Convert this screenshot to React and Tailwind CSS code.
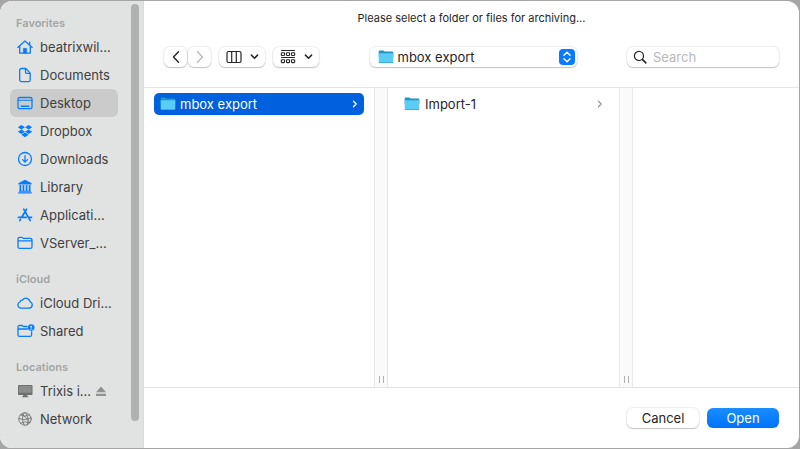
import { useState } from "react";
import { FaDropbox } from "react-icons/fa6";

const line = {
  fill: "none",
  stroke: "currentColor",
  strokeWidth: 1.3,
  strokeLinecap: "round",
  strokeLinejoin: "round",
};

const HomeIcon = () => (
  <svg viewBox="0 0 16 16" className="w-4 h-4" {...line}>
    <path d="M.8 8.400 8 1.900l7.200 6.500M2.700 7.200v6.900h10.600V7.200M12.700 5.800V3.200" />
    <path d="M6.300 14V9.300h3.400V14z" fill="currentColor" strokeWidth="0.5" />
  </svg>
);

const DocumentIcon = () => (
  <svg viewBox="0 0 16 16" className="w-4 h-4" {...line}>
    <path d="M4.200 1.500h4.600l4.400 4.600v7a1.500 1.500 0 0 1-1.500 1.500H4.200a1.500 1.500 0 0 1-1.500-1.500V3a1.500 1.500 0 0 1 1.500-1.500z" />
    <path d="M8.500 1.800v3.500q0 1.100 1.100 1.100h3.400" />
  </svg>
);

const DesktopIcon = () => (
  <svg viewBox="0 0 16 16" className="w-4 h-4" {...line}>
    <rect x="1" y="2.500" width="14" height="11.200" rx="1.600" />
    <path d="M1.200 5.200h13.600" strokeWidth="1.100" />
    <path d="M4.300 11.300h7.400" strokeWidth="1.600" />
  </svg>
);

const DownloadsIcon = () => (
  <svg viewBox="0 0 16 16" className="w-4 h-4" {...line}>
    <circle cx="8" cy="8" r="6.500" />
    <path d="M8 4.600v6.300M5.500 8.600 8 11.100l2.500-2.500" />
  </svg>
);

const LibraryIcon = () => (
  <svg viewBox="0 0 16 16" className="w-4 h-4" fill="currentColor">
    <path d="M8 .8 14.300 4q.4.300.4.900v.6H1.300v-.6q0-.6.400-.9z" />
    <path d="M2.500 6h1.800v6H2.500zM5.600 6h1.700v6H5.600zM8.700 6h1.700v6H8.700zM11.700 6h1.800v6h-1.800zM2 11.800h12v1H2zM1.200 13.300h13.600v1.300H1.200z" />
  </svg>
);

const ApplicationsIcon = () => (
  <svg viewBox="0 0 16 16" className="w-4 h-4" {...line} strokeWidth="1.700">
    <path d="M9.500 2.200 4.700 10.300M6.700 2.200l6.500 11.400M1.500 10.400h7.700M12 10.400h2.500M3.500 12.400l-.7 1.200" />
  </svg>
);

const FolderIcon = () => (
  <svg viewBox="0 0 16 16" className="w-4 h-4" {...line}>
    <path d="M1 4q0-1.600 1.600-1.600h2.200q.7 0 1.200.5l.6.500h6.800Q15 3.400 15 5v6.700q0 1.600-1.600 1.600H2.600Q1 13.300 1 11.700zM1.200 5.900h13.600" />
  </svg>
);

const CloudIcon = () => (
  <svg viewBox="0 0 16 16" className="w-4 h-4" {...line}>
    <path d="M4 13.200a3.200 3.200 0 0 1-1-6.200 2.100 2.100 0 0 1 2.500-1.800 4 4 0 0 1 7.400 1.400A3.400 3.400 0 0 1 12.300 13.200z" />
  </svg>
);

const SharedIcon = () => (
  <svg viewBox="0 0 18 16" className="w-[18px] h-4" {...line}>
    <path d="M10 3.500H6.500l-.6-.5q-.5-.5-1.200-.5H2.500Q1 2.500 1 4v7.900q0 1.500 1.500 1.500h10.600q1.500 0 1.500-1.500V8.800M1.200 6h9.200" />
    <circle cx="14.200" cy="4.600" r="3.300" fill="currentColor" stroke="none" />
    <circle cx="14.200" cy="3.700" r="1" fill="#e1e3e2" stroke="none" />
    <path d="M12.600 6.500q1.600-1.900 3.200 0z" fill="#e1e3e2" stroke="none" />
  </svg>
);

const ComputerIcon = () => (
  <svg viewBox="0 0 16 16" className="w-4 h-4">
    <rect x="1" y="2" width="14.500" height="10" rx=".8" fill="#6e6f6f" />
    <rect x="2" y="3" width="12.500" height="6.800" fill="#8b8c8c" />
    <path d="M6.300 12h3.900l.5 1.700h-5zM5 13.500h6.500v.8H5z" fill="#6e6f6f" />
  </svg>
);

const NetworkIcon = () => (
  <svg viewBox="0 0 16 16" className="w-4 h-4 text-[#737474]" {...line} strokeWidth="0.900">
    <circle cx="8" cy="8" r="6.200" />
    <path d="M2 7.500q6 2.500 12-.8M3.300 4q5 2.500 9.300-.2M3.500 12.200q4-2.500 9.300-.5M7 2q-3.500 6 .3 12.200M8.500 1.900q4.500 5 1.700 12M4.500 3q5 3 8.300 8.500" />
  </svg>
);

const EjectIcon = () => (
  <svg viewBox="0 0 12 12" className="w-3 h-3" fill="#8f9090">
    <path d="M6 1.500 11 7.300H1zM1 8.700h10v2.200H1z" />
  </svg>
);

const BlueFolder = () => (
  <svg viewBox="0 0 16 16" className="w-4 h-4 shrink-0">
    <path d="M.7 2.500q0-1 1-1h3.600l1.400 1.100h7.600q1 0 1 1V8H.7z" fill="#1d97c4" />
    <path d="M.7 4.300h14.600v8.700q0 1-1 1H1.700q-1 0-1-1z" fill="#5accf6" />
    <path d="M.8 13.200h14.400q-.2.900-1 .9H1.800q-.8 0-1-.9z" fill="#2fa6d5" />
  </svg>
);

const Chevron = ({ d, className, width = 1.4 }) => (
  <svg viewBox="0 0 16 16" className={className} {...line} strokeWidth={width}>
    <path d={d} />
  </svg>
);

const groups = [
  {
    title: "Favorites",
    items: [
      { label: "beatrixwil...", icon: <HomeIcon /> },
      { label: "Documents", icon: <DocumentIcon /> },
      { label: "Desktop", icon: <DesktopIcon /> },
      { label: "Dropbox", icon: <FaDropbox className="w-4 h-[14px]" /> },
      { label: "Downloads", icon: <DownloadsIcon /> },
      { label: "Library", icon: <LibraryIcon /> },
      { label: "Applicati...", icon: <ApplicationsIcon /> },
      { label: "VServer_...", icon: <FolderIcon /> },
    ],
  },
  {
    title: "iCloud",
    items: [
      { label: "iCloud Dri...", icon: <CloudIcon /> },
      { label: "Shared", icon: <SharedIcon /> },
    ],
  },
  {
    title: "Locations",
    items: [
      { label: "Trixis i...", icon: <ComputerIcon />, eject: true },
      { label: "Network", icon: <NetworkIcon /> },
    ],
  },
];

const raised = "bg-white rounded-md shadow-[0_0_1px_1px_#00000012,0_1px_1px_#00000030]";

const Divider = () => (
  <div className="bg-[#fafafa] border-x border-[#e8e8e8] flex items-end justify-center gap-[3px] pb-1">
    <span className="w-px h-[7px] bg-[#b0b0b0]" />
    <span className="w-px h-[7px] bg-[#b0b0b0]" />
  </div>
);

const App = () => {
  const [place, setPlace] = useState("Desktop");
  const [search, setSearch] = useState("");

  return (
    <div className="min-h-screen bg-[#a5a5a5] pt-px pr-px pb-px flex font-['Inter','Liberation_Sans',sans-serif] text-[13px] leading-4 text-[#262626]">
      <div className="flex-1 flex bg-white rounded-xl overflow-hidden">
        <aside className="w-36 shrink-0 bg-[#e1e3e2] border-r border-[#d9dada] flex justify-between pr-1">
          <nav className="w-[118px] pl-[10px] pt-[14px] flex flex-col gap-[14px]">
            {groups.map((group) => (
              <div key={group.title}>
                <h2 className="pl-[6px] h-[18px] text-[11px] font-semibold text-[#a3a5a4]">
                  {group.title}
                </h2>
                {group.items.map((item) => (
                  <div
                    key={item.label}
                    className={
                      item.label === place
                        ? "flex items-center h-7 rounded-md bg-[#cacbca]"
                        : "flex items-center h-7 rounded-md"
                    }
                  >
                    <button
                      className="flex items-center h-7 pl-[7px] text-left whitespace-nowrap text-[#3f4040]"
                      onClick={() => setPlace(item.label)}
                    >
                      <span className="w-[23px] shrink-0 text-[#087cff]">{item.icon}</span>
                      {item.label}
                    </button>
                    {item.eject && (
                      <button className="ml-1" aria-label="Eject">
                        <EjectIcon />
                      </button>
                    )}
                  </div>
                ))}
              </div>
            ))}
          </nav>
          {/* scroll thumb */}
          <div className="w-2 mt-[3px] mb-[27px] rounded-full bg-[#b0b1b0]" />
        </aside>

        <main className="flex-1 min-w-0 flex flex-col">
          <h1 className="pt-[9px] text-center text-[11px]">
            Please select a folder or files for archiving...
          </h1>
          <div className="h-[62px] pl-5 pr-5 flex items-center justify-between border-b border-[#e6e6e6]">
            <div className="flex gap-2">
              <div className="flex gap-px">
                <button className={`w-[23px] h-5 flex items-center justify-center ${raised}`} aria-label="Back">
                  <Chevron d="M10.500 2.800 5.500 8l5 5.200" className="w-4 h-4" />
                </button>
                <button
                  className={`w-[23px] h-5 flex items-center justify-center text-[#b9b9b9] ${raised}`}
                  aria-label="Forward"
                >
                  <Chevron d="M5.500 2.800 10.500 8l-5 5.200" className="w-4 h-4" />
                </button>
              </div>
              <button
                className={`w-[46px] h-5 flex items-center justify-center gap-2 ${raised}`}
                aria-label="Column view"
              >
                <svg viewBox="0 0 16 16" className="w-4 h-4" {...line} strokeWidth="1.200">
                  <rect x="1" y="2.500" width="14" height="11" rx="1.500" />
                  <path d="M5.700 2.500v11M10.300 2.500v11" />
                </svg>
                <Chevron d="M2.500 5.500 8 11l5.500-5.500" className="w-[9px] h-[9px]" width={2.7} />
              </button>
              <button
                className={`w-[46px] h-5 flex items-center justify-center gap-2 ${raised}`}
                aria-label="Group items"
              >
                <svg viewBox="0 0 16 16" className="w-4 h-4" {...line} strokeWidth="1.100">
                  <path d="M1.500 1.500h13M1.500 8.500h13" />
                  <rect x="1.300" y="3.700" width="3.200" height="2.800" rx=".8" />
                  <rect x="6.400" y="3.700" width="3.200" height="2.800" rx=".8" />
                  <rect x="11.500" y="3.700" width="3.200" height="2.800" rx=".8" />
                  <rect x="1.300" y="10.800" width="3.200" height="2.800" rx=".8" />
                  <rect x="6.400" y="10.800" width="3.200" height="2.800" rx=".8" />
                  <rect x="11.500" y="10.800" width="3.200" height="2.800" rx=".8" />
                </svg>
                <Chevron d="M2.500 5.500 8 11l5.500-5.500" className="w-[9px] h-[9px]" width={2.7} />
              </button>
            </div>

            <label className={`w-[207px] h-5 pl-2 pr-[2px] flex items-center ${raised}`}>
              <BlueFolder />
              <select
                aria-label="Folder"
                className="appearance-none flex-1 min-w-0 h-5 pl-1 bg-transparent outline-none"
              >
                <option>mbox export</option>
              </select>
              <span className="w-4 h-4 rounded bg-[#0a7aff] text-white flex items-center justify-center">
                <Chevron d="M4.500 6 8 2.500 11.500 6M4.500 10 8 13.500l3.500-3.500" className="w-[14px] h-[14px]" width={1.7} />
              </span>
            </label>

            <label className={`w-[152px] h-5 pl-[6px] flex items-center gap-[6px] ${raised}`}>
              <svg viewBox="0 0 16 16" className="w-[14px] h-[14px] shrink-0" {...line} strokeWidth="1.400">
                <circle cx="6.800" cy="6.800" r="5.200" />
                <path d="m10.700 10.700 4 4" strokeWidth="1.800" />
              </svg>
              <input
                aria-label="Search"
                placeholder="Search"
                value={search}
                onChange={(e) => setSearch(e.target.value)}
                className="w-full min-w-0 h-5 bg-transparent outline-none placeholder:text-[#b8b8b8]"
              />
            </label>
          </div>

          <div className="flex-1 grid grid-cols-[230px_14px_231px_14px_1fr]">
            <div className="px-[10px] pt-[5px]">
              <button className="w-full h-[22px] pl-[6px] pr-1 rounded-[5px] bg-[#0060dd] text-white flex items-center gap-1">
                <BlueFolder />
                <span className="flex-1 text-left">mbox export</span>
                <Chevron d="M5.500 3.500 10 8l-4.500 4.500" className="w-[10px] h-[10px]" width={2} />
              </button>
            </div>
            <Divider />
            <div className="px-[10px] pt-[5px]">
              <button className="w-full h-[22px] pl-[6px] pr-1 flex items-center gap-[5px]">
                <BlueFolder />
                <span className="flex-1 text-left">Import-1</span>
                <Chevron
                  d="M5.500 3.500 10 8l-4.500 4.500"
                  className="w-[10px] h-[10px] text-[#999999]"
                  width={2}
                />
              </button>
            </div>
            <Divider />
            <div />
          </div>

          <footer className="h-[61px] pr-5 flex items-center justify-end gap-2 border-t border-[#e2e2e2]">
            <button className={`w-[72px] h-5 ${raised}`}>Cancel</button>
            <button className="w-[72px] h-5 rounded-md bg-linear-to-b from-[#1a8dff] to-[#0072fb] text-white">
              Open
            </button>
          </footer>
        </main>
      </div>
    </div>
  );
};

export default App;
